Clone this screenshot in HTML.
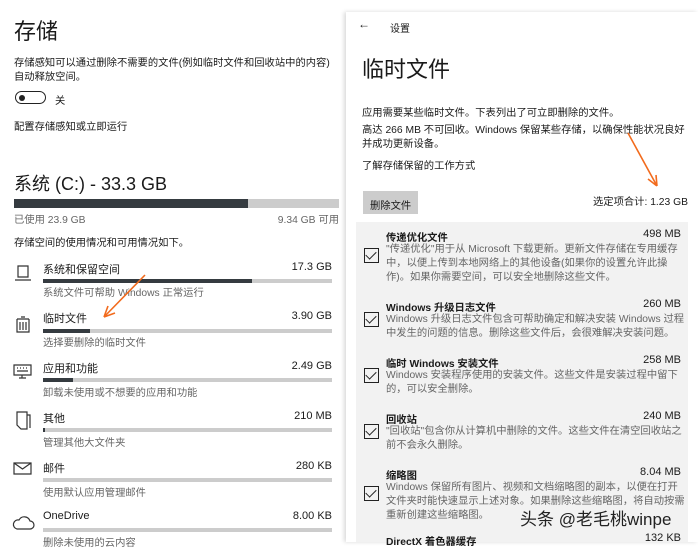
<!DOCTYPE html><html><head><meta charset="utf-8"><style>
*{margin:0;padding:0;box-sizing:border-box}
body{width:698px;height:542px;overflow:hidden;background:#fff;font-family:"Liberation Sans","Noto Sans CJK SC",sans-serif;color:#1a1a1a;position:relative;font-size:10.3px}
.a{position:absolute;white-space:nowrap}
.g{color:#666}
.bar{position:absolute;height:4px;background:#ccc}
.bar i{display:block;height:4px;background:#353b40}
.rp{position:absolute;left:346px;top:12px;width:352px;height:530px;background:#fff;box-shadow:-2px 0 4px rgba(0,0,0,.15)}
.list{position:absolute;left:356px;top:222px;width:332px;height:320px;background:#f2f2f2}
.cb{position:absolute;left:364px;width:15px;height:15px;border:1.5px solid #222}
.cb:after{content:"";position:absolute;left:3px;top:0px;width:5px;height:9px;border:solid #222;border-width:0 1.3px 1.3px 0;transform:rotate(45deg)}
.t{font-weight:bold;left:386px}
.r{text-align:right}
.v{font-size:11px}
.l{font-size:11px}
</style></head><body>
<div class="a" style="left:14px;top:14px;font-size:22px">存储</div>
<div class="a" style="left:14px;top:57px;line-height:14px">存储感知可以通过删除不需要的文件(例如临时文件和回收站中的内容)<br>自动释放空间。</div>
<div class="a" style="left:15px;top:91px;width:31px;height:13px;border:1.5px solid #222;border-radius:7px"></div>
<div class="a" style="left:19px;top:95px;width:6px;height:6px;background:#222;border-radius:50%"></div>
<div class="a" style="left:55px;top:92px">关</div>
<div class="a" style="left:14px;top:118px">配置存储感知或立即运行</div>
<div class="a" style="left:14px;top:170px;font-size:18px">系统 (C:) - 33.3 GB</div>
<div class="bar" style="left:14px;top:199px;width:325px;height:9px"><i style="width:234px;height:9px"></i></div>
<div class="a g" style="left:14px;top:211px">已使用 23.9 GB</div>
<div class="a g r" style="right:359px;top:211px">9.34 GB 可用</div>
<div class="a" style="left:14px;top:234px">存储空间的使用情况和可用情况如下。</div>

<div class="a l" style="left:43px;top:261px">系统和保留空间</div><div class="a r v" style="right:366px;top:261px">17.3 GB</div>
<div class="bar" style="left:43px;top:279px;width:289px"><i style="width:209px"></i></div>
<div class="a g" style="left:43px;top:284px">系统文件可帮助 Windows 正常运行</div>
<div class="a l" style="left:43px;top:310px">临时文件</div><div class="a r v" style="right:366px;top:310px">3.90 GB</div>
<div class="bar" style="left:43px;top:329px;width:289px"><i style="width:47px"></i></div>
<div class="a g" style="left:43px;top:334px">选择要删除的临时文件</div>
<div class="a l" style="left:43px;top:360px">应用和功能</div><div class="a r v" style="right:366px;top:360px">2.49 GB</div>
<div class="bar" style="left:43px;top:378px;width:289px"><i style="width:30px"></i></div>
<div class="a g" style="left:43px;top:384px">卸载未使用或不想要的应用和功能</div>
<div class="a l" style="left:43px;top:410px">其他</div><div class="a r v" style="right:366px;top:410px">210 MB</div>
<div class="bar" style="left:43px;top:428px;width:289px"><i style="width:2px"></i></div>
<div class="a g" style="left:43px;top:434px">管理其他大文件夹</div>
<div class="a l" style="left:43px;top:460px">邮件</div><div class="a r v" style="right:366px;top:460px">280 KB</div>
<div class="bar" style="left:43px;top:478px;width:289px"></div>
<div class="a g" style="left:43px;top:484px">使用默认应用管理邮件</div>
<div class="a l" style="left:43px;top:510px">OneDrive</div><div class="a r v" style="right:366px;top:510px">8.00 KB</div>
<div class="bar" style="left:43px;top:528px;width:289px"></div>
<div class="a g" style="left:43px;top:534px">删除未使用的云内容</div>

<svg class="a" style="left:0;top:255px" width="40" height="287" fill="none" stroke="#333" stroke-width="1.2">
<path d="M18 11h10v11H18zM15 25h16"/>
<path d="M17 64h12M21 62h4M17 64v13h12V64M20 67v8M23 67v8M26 67v8"/>
<path d="M14 110h17v10H14zM22 120v3M19 123h7M17 113h1M20 113h1M23 113h1M26 113h1M17 116h11"/>
<path d="M17 157h10v17h-6l-4-4zM27 160h3v13"/>
<path d="M14 208h17v11H14zM14 208l8.5 6 8.5-6"/>
<path d="M17 274h13a4 4 0 0 0 0-8 6 6 0 0 0-11-1 4.5 4.5 0 0 0-2 9z"/>
</svg>

<div class="rp"></div>
<div class="a" style="left:358px;top:17px;font-size:12px">←</div>
<div class="a" style="left:390px;top:20px;font-size:10px">设置</div>
<div class="a" style="left:362px;top:52px;font-size:22px">临时文件</div>
<div class="a" style="left:362px;top:104px">应用需要某些临时文件。下表列出了可立即删除的文件。</div>
<div class="a" style="left:362px;top:124px;line-height:14px">高达 266 MB 不可回收。Windows 保留某些存储，以确保性能状况良好<br>并成功更新设备。</div>
<div class="a" style="left:362px;top:157px">了解存储保留的工作方式</div>
<div class="a" style="left:363px;top:191px;width:55px;height:23px;background:#ccc;padding:6px 0 0 7px">删除文件</div>
<div class="a r" style="right:10px;top:193px">选定项合计: 1.23 GB</div>
<div class="list"></div>
<div class="a t" style="top:229px">传递优化文件</div><div class="a r v" style="right:17px;top:228px">498 MB</div>
<div class="cb" style="top:248px"></div>
<div class="a g" style="left:386px;top:243px;line-height:14px">"传递优化"用于从 Microsoft 下载更新。更新文件存储在专用缓存<br>中，以便上传到本地网络上的其他设备(如果你的设置允许此操<br>作)。如果你需要空间，可以安全地删除这些文件。</div>
<div class="a t" style="top:299px">Windows 升级日志文件</div><div class="a r v" style="right:17px;top:298px">260 MB</div>
<div class="cb" style="top:312px"></div>
<div class="a g" style="left:386px;top:313px;line-height:14px">Windows 升级日志文件包含可帮助确定和解决安装 Windows 过程<br>中发生的问题的信息。删除这些文件后，会很难解决安装问题。</div>
<div class="a t" style="top:355px">临时 Windows 安装文件</div><div class="a r v" style="right:17px;top:354px">258 MB</div>
<div class="cb" style="top:368px"></div>
<div class="a g" style="left:386px;top:369px;line-height:14px">Windows 安装程序使用的安装文件。这些文件是安装过程中留下<br>的，可以安全删除。</div>
<div class="a t" style="top:411px">回收站</div><div class="a r v" style="right:17px;top:410px">240 MB</div>
<div class="cb" style="top:424px"></div>
<div class="a g" style="left:386px;top:425px;line-height:14px">"回收站"包含你从计算机中删除的文件。这些文件在清空回收站之<br>前不会永久删除。</div>
<div class="a t" style="top:467px">缩略图</div><div class="a r v" style="right:17px;top:466px">8.04 MB</div>
<div class="cb" style="top:486px"></div>
<div class="a g" style="left:386px;top:481px;line-height:14px">Windows 保留所有图片、视频和文档缩略图的副本，以便在打开<br>文件夹时能快速显示上述对象。如果删除这些缩略图，将自动按需<br>重新创建这些缩略图。</div>
<div class="a t" style="top:533px">DirectX 着色器缓存</div><div class="a r v" style="right:17px;top:532px">132 KB</div>
<div class="a" style="left:520px;top:505px;font-size:17px;color:#222">头条 @老毛桃winpe</div>
<svg class="a" style="left:0;top:0" width="698" height="542" fill="none" stroke="#f26b1d" stroke-width="1.6">
<path d="M145 275L104 317M104 317l11-4M104 317l4-11"/>
<path d="M628 133L657 186M657 186l-1-11M657 186l-9-7"/>
</svg>
</body></html>
